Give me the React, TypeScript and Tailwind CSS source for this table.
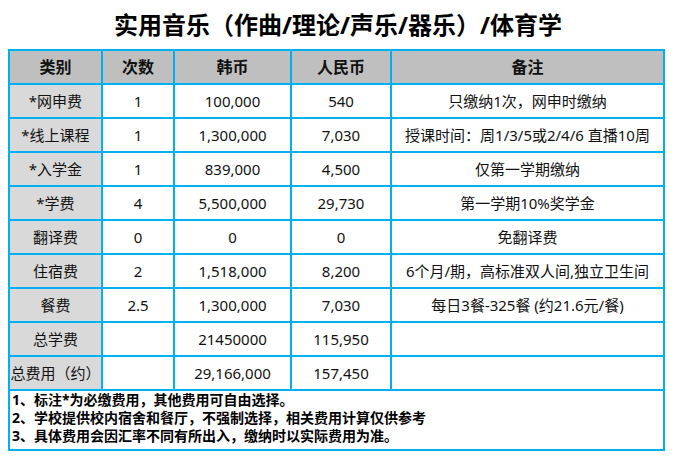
import React from "react";

const rows: { c: string; n: string; krw: string; cny: string; note: string }[] = [
  { c: "*网申费", n: "1", krw: "100,000", cny: "540", note: "只缴纳1次，网申时缴纳" },
  { c: "*线上课程", n: "1", krw: "1,300,000", cny: "7,030", note: "授课时间：周1/3/5或2/4/6 直播10周" },
  { c: "*入学金", n: "1", krw: "839,000", cny: "4,500", note: "仅第一学期缴纳" },
  { c: "*学费", n: "4", krw: "5,500,000", cny: "29,730", note: "第一学期10%奖学金" },
  { c: "翻译费", n: "0", krw: "0", cny: "0", note: "免翻译费" },
  { c: "住宿费", n: "2", krw: "1,518,000", cny: "8,200", note: "6个月/期，高标准双人间,独立卫生间" },
  { c: "餐费", n: "2.5", krw: "1,300,000", cny: "7,030", note: "每日3餐-325餐 (约21.6元/餐)" },
  { c: "总学费", n: "", krw: "21450000", cny: "115,950", note: "" },
  { c: "总费用（约）", n: "", krw: "29,166,000", cny: "157,450", note: "" },
];

const cell = "bg-white h-[32px] flex items-center justify-center whitespace-nowrap text-[15px] text-[#111]";
const head = "bg-[#BFBFBF] h-[32px] flex items-center justify-center font-bold text-[16px] text-[#111]";

export default function App() {
  return (
    <div
      className="w-[675px] h-[458px] bg-white overflow-hidden"
      style={{ fontFamily: '"Noto Sans", "Noto Sans CJK SC", sans-serif' }}
    >
      <div className="h-[49px] flex items-center justify-center pl-[1px]">
        <h1 className="text-[24px] font-bold text-black leading-none">实用音乐（作曲/理论/声乐/器乐）/体育学</h1>
      </div>
      <div className="ml-[8px] w-[657px] bg-[#00B0F0] p-[2px] grid grid-cols-[91px_70px_115px_98px_271px] gap-[2px]">
        <div className={head}>类别</div>
        <div className={head}>次数</div>
        <div className={head}>韩币</div>
        <div className={head}>人民币</div>
        <div className={head}>备注</div>
        {rows.map((r) => (
          <React.Fragment key={r.c}>
            <div className={cell + " !bg-[#D9D9D9]"}>{r.c}</div>
            <div className={cell}>{r.n}</div>
            <div className={cell}>{r.krw}</div>
            <div className={cell}>{r.cny}</div>
            <div className={cell}>{r.note}</div>
          </React.Fragment>
        ))}
        <div className="col-span-5 bg-white h-[58px] pl-[2px] text-[14px] font-bold leading-[18px] text-black">
          <div>1、标注*为必缴费用，其他费用可自由选择。</div>
          <div>2、学校提供校内宿舍和餐厅，不强制选择，相关费用计算仅供参考</div>
          <div>3、具体费用会因汇率不同有所出入，缴纳时以实际费用为准。</div>
        </div>
      </div>
    </div>
  );
}
